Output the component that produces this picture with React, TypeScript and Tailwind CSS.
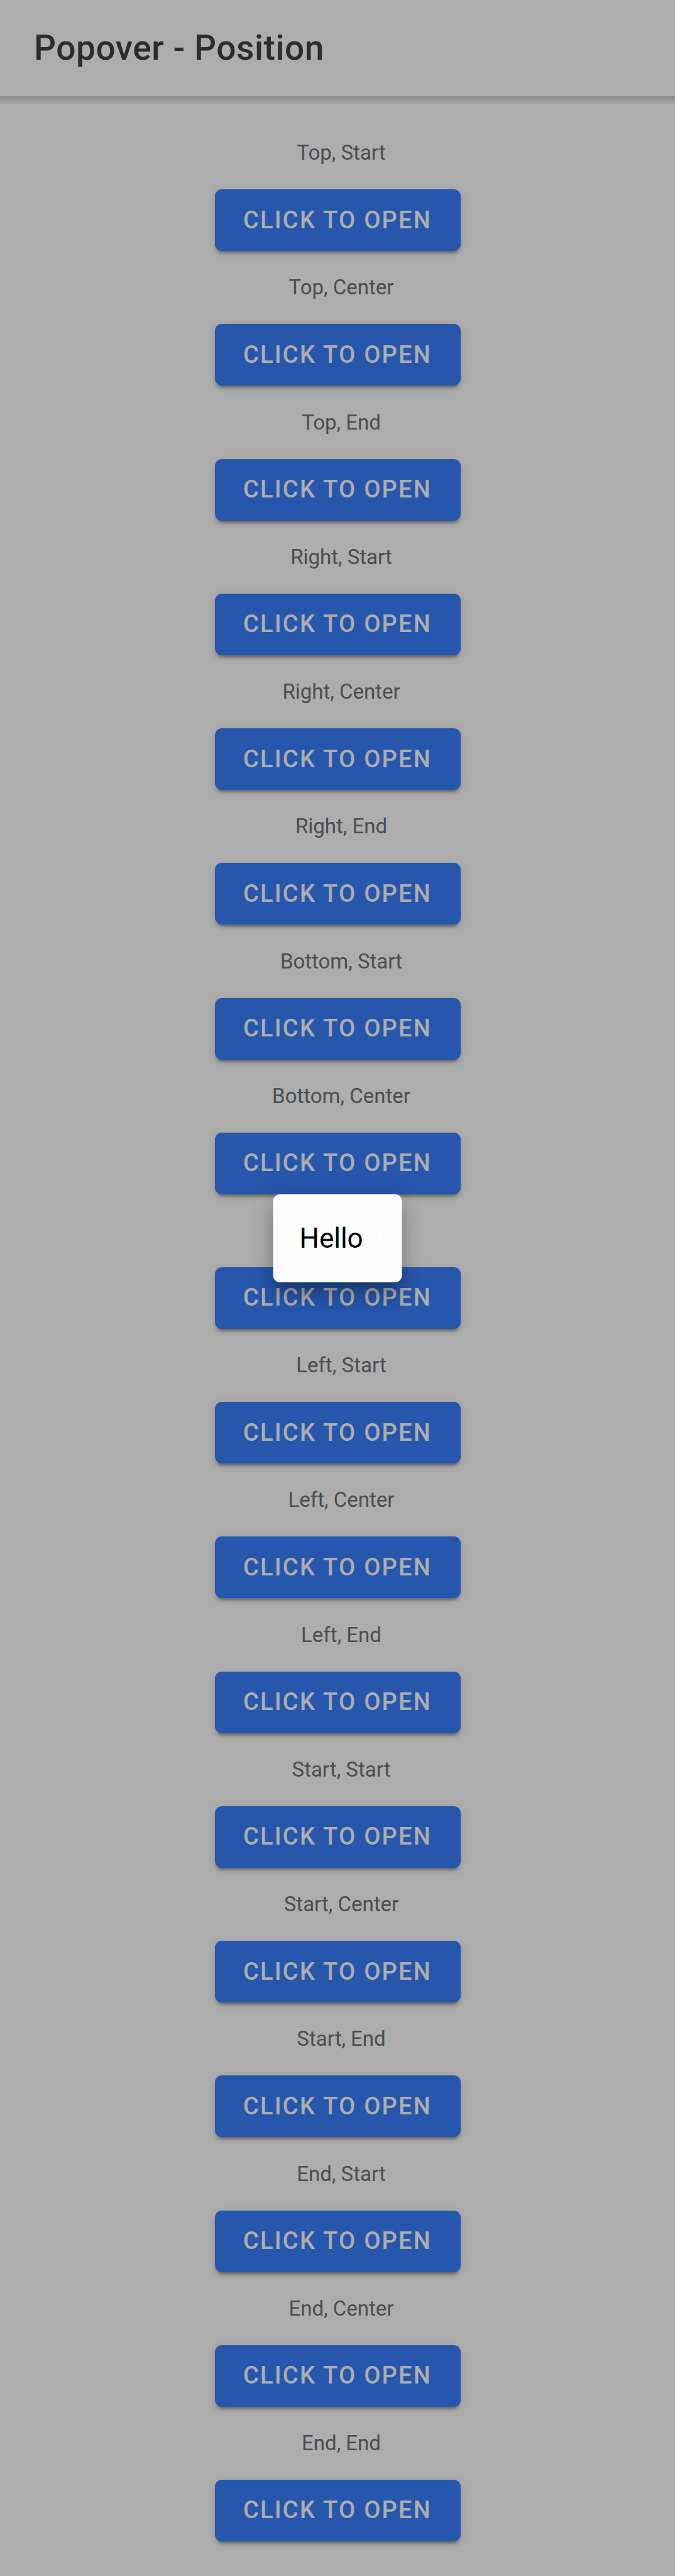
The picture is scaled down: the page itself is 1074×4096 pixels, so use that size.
type Placement = { side: string; align: string };

const sides = ["Top", "Right", "Bottom", "Left", "Start", "End"];
const aligns = ["Start", "Center", "End"];

const placements: Placement[] = sides.flatMap((side) =>
  aligns.map((align) => ({ side, align })),
);

const openPlacement = "Bottom, Center";

function Popover() {
  return (
    <div
      role="dialog"
      aria-label="Hello"
      className="absolute top-full left-1/2 z-20 w-[205px] -translate-x-1/2 rounded-[11px] bg-white px-[42px] py-11 text-[44px] leading-[52px] text-black opacity-[0.99] shadow-[0_14px_14px_-8px_rgba(0,0,0,0.2),0_22px_27px_3px_rgba(0,0,0,0.14),0_8px_38px_5px_rgba(0,0,0,0.12)]"
    >
      Hello
    </div>
  );
}

function PlacementRow({ side, align }: Placement) {
  const name = `${side}, ${align}`;
  const id = `placement-${side}-${align}`.toLowerCase();
  return (
    <li className="flex flex-1 flex-col items-center justify-end gap-[38px]">
      <h2 id={id} className="pl-3 text-[33px] leading-10 text-[#6f7378]">
        {name}
      </h2>
      <div className="relative">
        <button
          type="button"
          aria-describedby={id}
          className="block h-[98px] min-w-[391px] rounded-[11px] bg-[#3880ff] px-[42px] text-[38px] font-medium tracking-[0.06em] whitespace-nowrap text-white uppercase shadow-[0_8px_3px_-5px_rgba(0,0,0,0.2),0_5px_5px_0_rgba(0,0,0,0.14),0_3px_14px_0_rgba(0,0,0,0.12)]"
        >
          Click to open
        </button>
        {name === openPlacement && <Popover />}
      </div>
    </li>
  );
}

export default function App() {
  return (
    <div className="relative flex min-h-screen flex-col bg-white font-['Roboto',sans-serif]">
      <header className="relative flex h-[153px] shrink-0 items-center px-[54px] after:absolute after:inset-x-0 after:top-full after:h-[14px] after:bg-linear-to-b after:from-black/20 after:to-transparent">
        <h1 className="text-[55px] font-medium tracking-[0.01em] text-[#424242]">
          Popover - Position
        </h1>
      </header>
      <main className="flex grow flex-col pt-8 pb-[55px]">
        <ul className="flex grow flex-col">
          {placements.map((p) => (
            <PlacementRow key={`${p.side}-${p.align}`} {...p} />
          ))}
        </ul>
      </main>
      <div aria-hidden="true" className="absolute inset-0 z-10 bg-black/32" />
    </div>
  );
}
